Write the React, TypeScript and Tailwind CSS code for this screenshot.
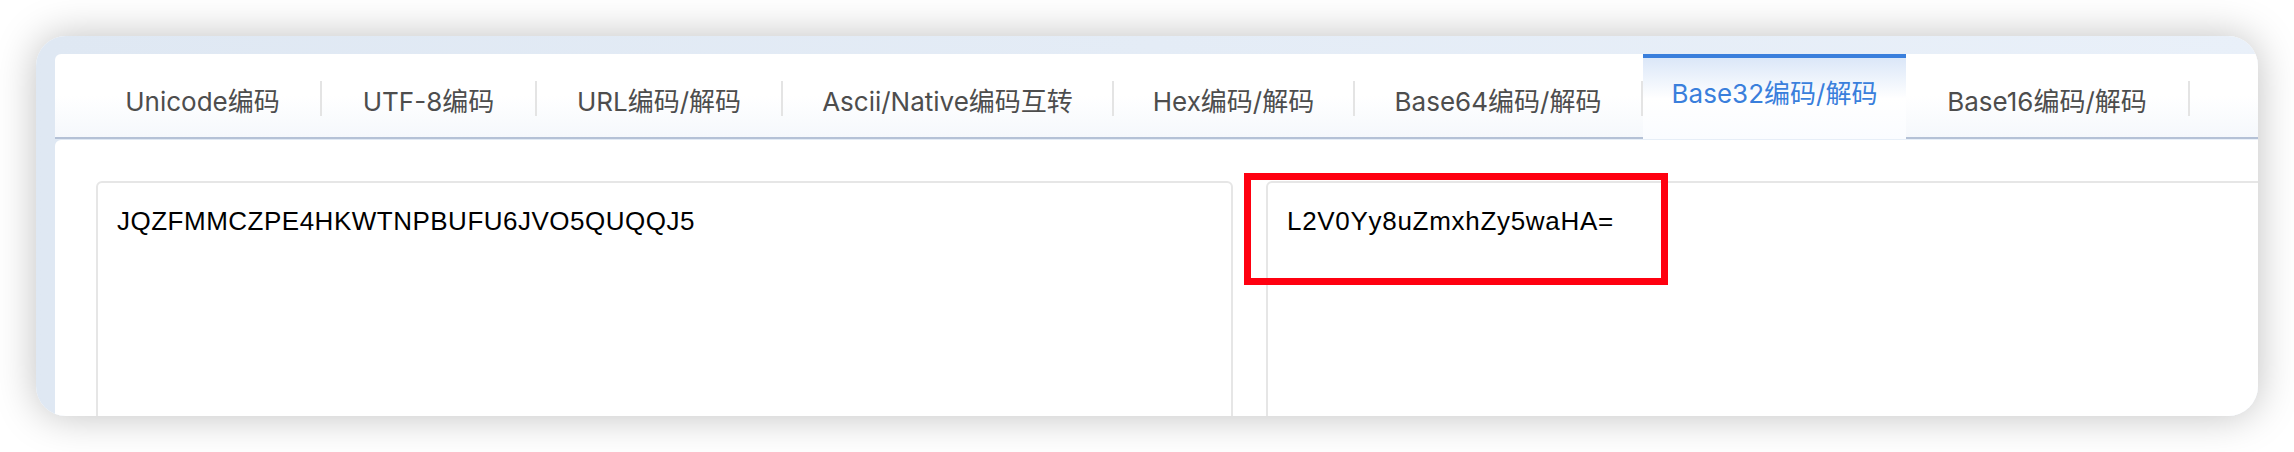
import React from "react";

const tabs = [
  { label: "Unicode编码", w: "w-[235px]" },
  { label: "UTF-8编码", w: "w-[213px]" },
  { label: "URL编码/解码", w: "w-[244px]" },
  { label: "Ascii/Native编码互转", w: "w-[329px]" },
  { label: "Hex编码/解码", w: "w-[239px]" },
  { label: "Base64编码/解码", w: "w-[286px]" },
  { label: "Base32编码/解码", w: "w-[263px]", active: true },
  { label: "Base16编码/解码", w: "w-[282px]" },
];

export default function App() {
  return (
    <div className="w-[2294px] h-[452px] bg-white pt-[36px] pl-[36px] overflow-hidden">
      <div className="w-[2222px] h-[380px] rounded-[30px] overflow-hidden bg-gradient-to-r from-[#dfe8f3] to-[#e9f0f9] shadow-[0_0_40px_rgba(0,0,0,0.25)] pt-[18px] pl-[19px] flex flex-col">
        {/* Tab bar */}
        <div className="h-[85px] shrink-0 bg-gradient-to-b from-white via-white to-[#f5f8fc] border-b-2 border-[#b4c1d6] rounded-tl-[6px] flex pl-[30px] font-['Inter','Noto_Sans_CJK_SC',sans-serif] text-[26px]">
          {tabs.map((t) =>
            t.active ? (
              <div
                key={t.label}
                className={`${t.w} h-[85px] shrink-0 relative z-10 border-t-4 border-[#3a7fdc] bg-gradient-to-b from-[#dbe7f8] via-white to-[#fafcff] flex items-center justify-center pb-[10px] text-[#3a7fdc]`}
              >
                {t.label}
              </div>
            ) : (
              <div key={t.label} className="flex h-full shrink-0 items-center">
                <div className={`${t.w} flex items-center justify-center pt-[12px] text-[#4d4d4d]`}>
                  {t.label}
                </div>
                <div className="w-[2px] h-[35px] mt-[6px] bg-[#e4e4e4]" />
              </div>
            )
          )}
        </div>
        {/* Content */}
        <div className="mt-[1px] flex-1 bg-white rounded-tl-[6px] relative pt-[41px] pl-[41px] flex gap-[33px] font-['Liberation_Sans',Arial,sans-serif] text-[26px] leading-[39px] text-black tracking-[0.5px]">
          <div className="w-[1137px] h-[300px] shrink-0 border-2 border-[#e6e6e6] rounded-[6px] p-[19px]">
            JQZFMMCZPE4HKWTNPBUFU6JVO5QUQQJ5
          </div>
          <div className="w-[1137px] h-[300px] shrink-0 border-2 border-[#e6e6e6] rounded-[6px] p-[19px] tracking-[0.7px]">
            L2V0Yy8uZmxhZy5waHA=
          </div>
          <div className="absolute left-[1189px] top-[33px] w-[424px] h-[112px] border-[7px] border-[#ff0010]" />
        </div>
      </div>
    </div>
  );
}
